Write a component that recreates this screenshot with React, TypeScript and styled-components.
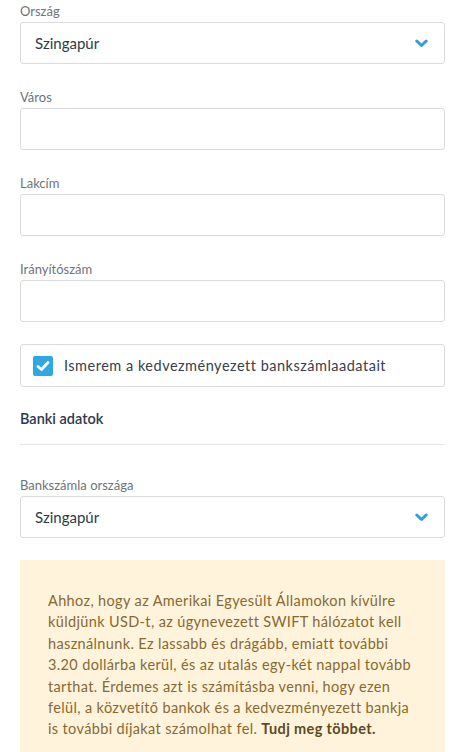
import React from "react";
import styled, { createGlobalStyle } from "styled-components";

const Global = createGlobalStyle`
  html, body { margin: 0; padding: 0; background: #fff; }
  body { font-family: Lato, "Open Sans", sans-serif; -webkit-font-smoothing: antialiased; }
`;

const Page = styled.div`
  width: 466px;
  padding: 0 21px 0 20px;
  box-sizing: border-box;
  display: flex;
  flex-direction: column;
`;

const Field = styled.div<{ $gap?: number }>`
  display: flex;
  flex-direction: column;
  margin-bottom: ${(p) => p.$gap ?? 22}px;
`;

const Label = styled.label`
  font-size: 13px;
  line-height: 22px;
  height: 22px;
  color: #6d737c;
`;

const Box = styled.div`
  height: 42px;
  box-sizing: border-box;
  border: 1px solid #d9dbde;
  border-radius: 3px;
  background: #fff;
  display: flex;
  align-items: center;
  padding: 0 14px;
`;

const SelectText = styled.span`
  flex: 1;
  font-size: 15px;
  color: #2e3a4b;
`;

const Chevron = () => (
  <svg width="13" height="9" viewBox="0 0 13 9" style={{ marginRight: 2 }}>
    <polyline
      points="1.8,2 6.5,6.5 11.2,2"
      fill="none"
      stroke="#2d9fdb"
      strokeWidth="3"
      strokeLinecap="round"
      strokeLinejoin="round"
    />
  </svg>
);

const CheckRow = styled.div`
  height: 43px;
  box-sizing: border-box;
  border: 1px solid #d9dbde;
  border-radius: 3px;
  display: flex;
  align-items: center;
  padding: 0 12px;
  gap: 11px;
`;

const CheckMark = styled.span`
  width: 20px;
  height: 20px;
  border-radius: 2px;
  background: #2ea8e2;
  display: flex;
  align-items: center;
  justify-content: center;
`;

const CheckText = styled.span`
  font-size: 14.5px;
  color: #37404d;
  letter-spacing: 0.5px;
`;

const Heading = styled.div`
  margin-top: 22px;
  font-size: 14.5px;
  line-height: 20px;
  font-weight: 600;
  color: #2e3a4b;
  padding-bottom: 15px;
  border-bottom: 1px solid #e4e6e8;
  margin-bottom: 29px;
`;

const Notice = styled.div`
  background: #fff3dc;
  padding: 30px 28px 20px 28px;
  font-size: 14.5px;
  line-height: 21.4px;
  color: #88692f;
  letter-spacing: 0.36px;
`;

const Strong = styled.strong`
  font-weight: 700;
  color: #5f4a1f;
`;

function SelectField({ label, value }: { label: string; value: string }) {
  return (
    <Field>
      <Label>{label}</Label>
      <Box>
        <SelectText>{value}</SelectText>
        <Chevron />
      </Box>
    </Field>
  );
}

function InputField({ label }: { label: string }) {
  return (
    <Field>
      <Label>{label}</Label>
      <Box />
    </Field>
  );
}

export default function App() {
  return (
    <>
      <Global />
      <Page>
        <SelectField label="Ország" value="Szingapúr" />
        <InputField label="Város" />
        <InputField label="Lakcím" />
        <InputField label="Irányítószám" />
        <CheckRow>
          <CheckMark>
            <svg width="14" height="12" viewBox="0 0 14 12">
              <polyline
                points="2,6.5 5.5,9.5 12,2.5"
                fill="none"
                stroke="#fff"
                strokeWidth="2.8"
                strokeLinecap="round"
                strokeLinejoin="round"
              />
            </svg>
          </CheckMark>
          <CheckText>Ismerem a kedvezményezett bankszámlaadatait</CheckText>
        </CheckRow>
        <Heading>Banki adatok</Heading>
        <SelectField label="Bankszámla országa" value="Szingapúr" />
        <Notice>
          Ahhoz, hogy az Amerikai Egyesült Államokon kívülre küldjünk USD-t, az úgynevezett
          SWIFT hálózatot kell használnunk. Ez lassabb és drágább, emiatt további 3.20
          dollárba kerül, és az utalás egy-két nappal tovább tarthat. Érdemes azt is
          számításba venni, hogy ezen felül, a közvetítő bankok és a kedvezményezett bankja
          is további díjakat számolhat fel. <Strong>Tudj meg többet.</Strong>
        </Notice>
      </Page>
    </>
  );
}
